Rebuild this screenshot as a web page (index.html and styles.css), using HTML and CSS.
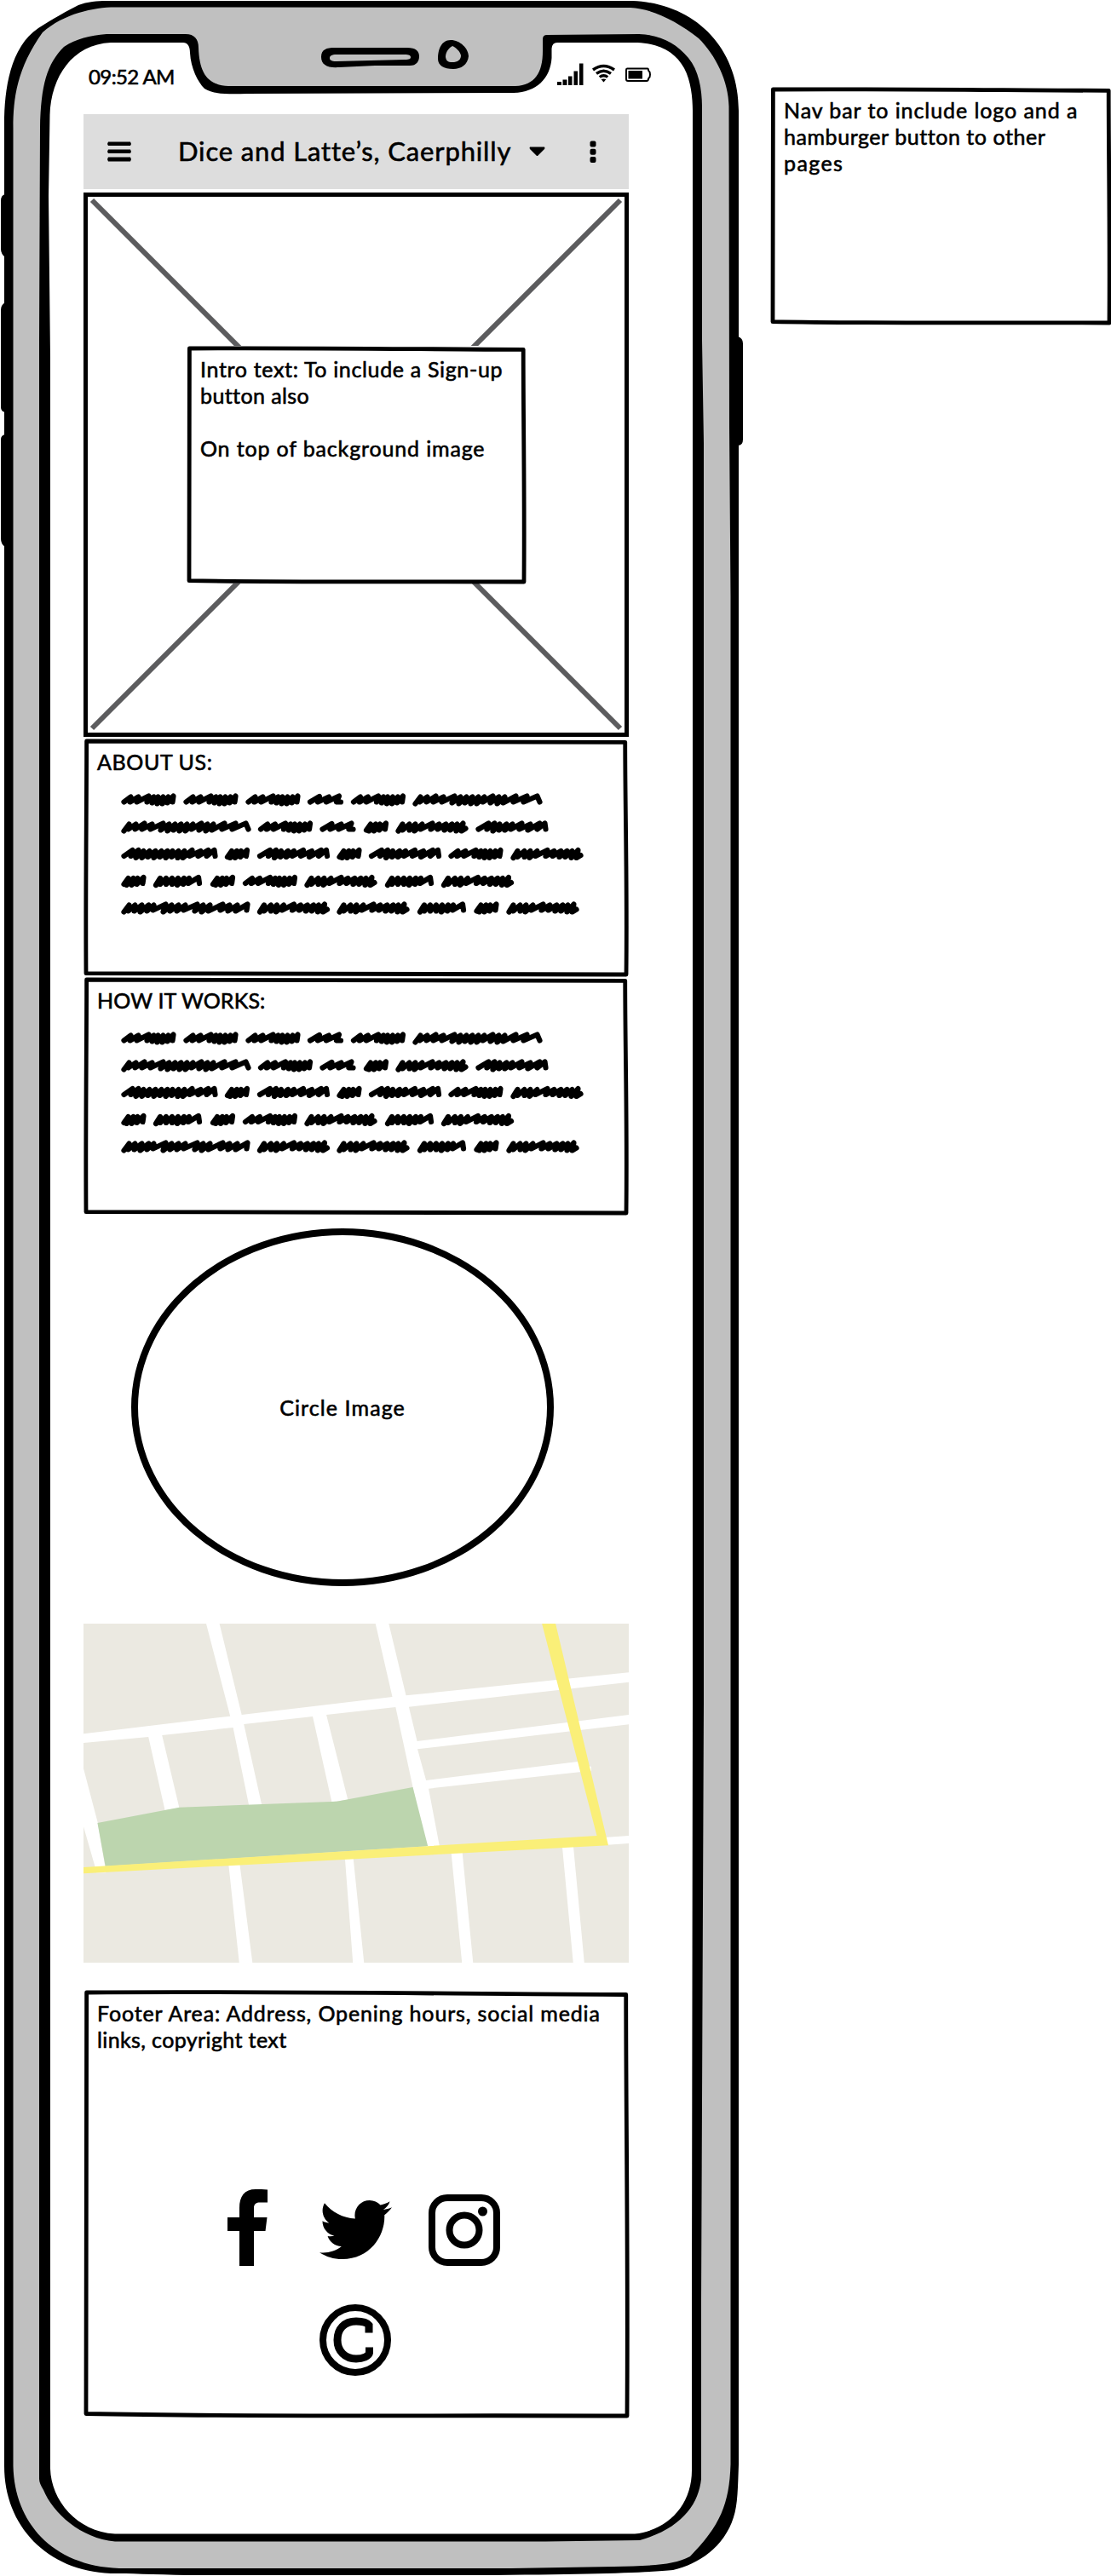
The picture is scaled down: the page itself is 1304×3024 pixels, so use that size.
FILE: index.html
```html
<!DOCTYPE html>
<html lang="en">
<head>
<meta charset="utf-8">
<title>Dice and Latte’s, Caerphilly</title>
<link rel="stylesheet" href="styles.css">
</head>
<body>
<svg class="defs" aria-hidden="true">
  <symbol id="box" viewBox="0 0 100 100" preserveAspectRatio="none" overflow="visible">
    <path class="ink-line" d="M.1 0C33 -.3 66 .3 99.800 .5C99.800 30 100.200 60 100 100C60 99.800 30 100.300 0 99.500C-.1 60 .1 30 .1 0Z"/>
  </symbol>
  <symbol id="w29" overflow="visible"><path d="M3 4L8-3L6 5L14-3L12 5L19-3L18 4L26-4L25 3"/></symbol>
  <symbol id="w42" overflow="visible"><path d="M3 3L14-3.500L12 3L25-3L22 3L37-4L34 3L39 3"/></symbol>
  <symbol id="w58" overflow="visible"><path d="M3 5L8-3L8 4L15-3L15 4L22-3L22 4L29-3L28 5L36-3L35 4L42-3L41 3L53-4L54 3"/></symbol>
  <symbol id="w64" overflow="visible"><path d="M3 3L11-3L10 3L20-3L18 3L32-4L30 3L38-3L36 4L43-3L42 5L49-3L48 5L55-3L54 4L61-4L60 3"/></symbol>
  <symbol id="w85a" overflow="visible"><path d="M3 5L8-3L8 4L16-3L16 4L23-3L22 5L31-3L29 3L43-4L41 3L51-3L49 3L59-3L57 4L66-3L64 4L72-3L71 5L79-4L77 5L82 2"/></symbol>
  <symbol id="w85b" overflow="visible"><path d="M3 3L15-4L13 3L22-4L20 5L28-3L27 4L36-3L34 4L43-3L41 3L54-4L51 3L64-3L61 4L75-4L72 3L81-4L82 3"/></symbol>
  <symbol id="w113" overflow="visible"><path d="M3 3L13-4L11 3L20-4L17 5L26-3L24 5L33-3L31 4L40-3L38 5L47-3L45 4L54-3L52 5L60-3L59 4L67-3L66 5L74-3L72 5L83-4L80 3L93-3L90 3L102-4L100 3L109-4L110 3"/></symbol>
  <symbol id="w152a" overflow="visible"><path d="M3 5L9-3L8 3L17-3L16 3L27-4L24 3L36-3L34 3L49-4L46 4L56-3L54 5L63-3L61 4L70-3L68 5L77-3L75 5L84-3L82 3L94-4L91 4L101-3L99 5L108-3L106 4L121-4L118 3L134-4L130 3L146-4L149 3"/></symbol>
  <symbol id="w152b" overflow="visible"><path d="M3 5L9-3L8 4L16-3L15 4L24-3L22 5L32-3L30 4L38-3L37 3L52-4L49 5L59-3L57 4L67-3L65 4L75-3L73 3L89-4L86 4L96-3L94 5L104-3L102 4L119-4L116 3L127-3L125 4L136-3L134 4L148-4L147 3"/></symbol>
  <symbol id="scribble" viewBox="142 928 545 150">
    <g class="scrawl">
      <use href="#w64" x="142.5" y="938.5"/><use href="#w64" x="215.5" y="938.5"/><use href="#w64" x="288.5" y="938.5"/><use href="#w42" x="361" y="938.5"/><use href="#w64" x="412" y="938.5"/><use href="#w152a" x="484.5" y="938.5"/>
      <use href="#w152a" x="142.5" y="970.5"/><use href="#w64" x="303" y="970.5"/><use href="#w42" x="375.5" y="970.5"/><use href="#w29" x="427" y="970.5"/><use href="#w85a" x="464.5" y="970.5"/><use href="#w85b" x="558.5" y="970.5"/>
      <use href="#w113" x="142.5" y="1002"/><use href="#w29" x="264" y="1002"/><use href="#w85b" x="302" y="1002"/><use href="#w29" x="395.5" y="1002"/><use href="#w85b" x="433" y="1002"/><use href="#w64" x="526.5" y="1002"/><use href="#w85a" x="599.5" y="1002"/>
      <use href="#w29" x="142.5" y="1034"/><use href="#w58" x="180" y="1034"/><use href="#w29" x="247" y="1034"/><use href="#w64" x="285" y="1034"/><use href="#w85a" x="357.5" y="1034"/><use href="#w58" x="452" y="1034"/><use href="#w85a" x="518" y="1034"/>
      <use href="#w152b" x="142.5" y="1065.5"/><use href="#w85a" x="302" y="1065.5"/><use href="#w85a" x="395.5" y="1065.5"/><use href="#w58" x="490" y="1065.5"/><use href="#w29" x="556.5" y="1065.5"/><use href="#w85a" x="594.5" y="1065.5"/>
    </g>
  </symbol>
</svg>

<main class="board">
  <section class="phone">
    <svg class="frame" width="872" height="3024" viewBox="0 0 872 3024" aria-hidden="true">
      <path d="M6 228Q1 229 1 236V292Q1 298 6 302ZM6 355Q1 358 1 364V478Q1 483 6 484ZM6 510Q1 511 1 516V632Q1 639 6 642ZM866 395Q872 397 872 403V516Q872 523 866 523Z"/>
      <path d="M5 145C5 105 12 55 45 33C62 22 80 12 92 6C102 2 115 1 125 1H742C815 4 867 55 867 130V2893C866 2920 866 2940 861 2955C850 2990 820 3010 790 3017C760 3020 700 3022 560 3023H220C180 3022 150 3021 130 3021C55 3018 5 2965 5 2895Z"/>
      <path class="metal" d="M15.500 150C15.500 115 20 80 50 38C75 16 110 8.500 135 8.500L740 9C765 10 795 25 820 45C840 65 855 95 855.500 125L856 500L857.500 700V2893C856 2940 845 2965 810 3001C790 3012 760 3012 720 3013L600 3015H140C60 3012 17 2960 15.500 2895Z"/>
      <path d="M47 150C48 100 55 75 75 55C90 45 105 42 125 40H218C228 40 233 46 233 56C234 85 243 100 268 101H605C628 100 637 85 637 60V46Q637 41 642 41L750 40C775 41 793 50 808 68C820 82 824 105 824 125V400L826 520V2000L823 2700V2910C820 2940 800 2968 751 2982L640 2983.500H135C95 2980 62 2950 51 2923Q46 2915 46 2910V400Z"/>
      <path class="glass" d="M57 230L58.500 135C60 90 85 52 130 50H215C220 50 223 54 223 62C224 80 232 96 240 104C250 111 270 110.500 290 110L603 109C630 108 646 92 647.500 68V57Q648 50 654 50H748C775 51 793 62 803 80C811 95 813 115 813 130V2000L812 2700V2900C812 2940 785 2970 745 2974.500H135C90 2972 60 2935 59 2898V420Z"/>
      <path fill-rule="evenodd" d="M393 56H478C488 56 492 60 492 66S489 77 481 77H440L398 79C384 80 377 76 377 67S383 56 393 56ZM395 64C389 64 387 66 387 68S388 72 395 72L475 70C481 70 482 69 482 67S480 64 475 64Z"/>
      <path fill-rule="evenodd" d="M529 47C540 47 550 57 550 66C549 76 541 81 532 81C521 81 514 77 514 69C514 58 518 47 529 47ZM531 54C527 56 523 61 523 67C524 73 527 73 533 73C539 72 541 69 541 65C540 60 535 56 531 54Z"/>
    </svg>

    <div class="screen">
      <header class="status">
        <span class="clock">09:52 AM</span>
        <svg width="110" height="27" viewBox="0 0 110 27" aria-hidden="true">
          <path d="M0 22h5v4h-5zM6.500 19.500h5v6.500h-5zM13 15.500h4.500v10.500h-4.500zM19.500 9.500h4.500v16.500h-4.500zM26 .5h4.500v25.500h-4.500z"/>
          <path class="wave" d="M42 8Q54.500 -1 67 8M46 12.300Q54.500 6 63 12.300M49.800 16.500Q54.500 12.800 59.200 16.500"/>
          <path d="M51.500 19Q54.500 17.800 57.500 19L54.500 22.500Z"/>
          <path class="cell" d="M82 6.500H106Q107 6.500 107.200 9Q109 10 109 13.500T107.200 18Q107 21 105 21H83Q81 21 81 19V8Q81 6.500 82 6.500Z"/>
          <path d="M83.500 9H100V18.500H83.500Z"/>
        </svg>
      </header>

      <nav class="nav">
        <svg class="burger" width="28" height="24" viewBox="0 0 28 24"><path d="M1 .5H27L28 3L27 5H1L0 3ZM1 9.500H27L28 12L27 14H1L0 12ZM1 18.500H27L28 21L27 23.500H1L0 21Z"/></svg>
        <span class="brand">Dice and Latte’s, Caerphilly</span>
        <svg class="caret" width="19" height="12" viewBox="0 0 19 12"><path d="M1 .5H18Q19 2 18 3L10.500 10.500Q9.500 11.500 8.500 10.500L1 3Q0 1.500 1 .5Z"/></svg>
        <svg class="dots" width="8" height="27" viewBox="0 0 8 27"><rect x=".5" y=".5" width="7" height="7" rx="2"/><rect x=".5" y="9.800" width="7" height="7" rx="2"/><rect x=".5" y="19" width="7" height="7" rx="2"/></svg>
      </nav>

      <section class="hero">
        <svg class="cross" viewBox="0 0 640 640" aria-hidden="true"><path d="M10 9L630 629M630 9L10 629"/></svg>
        <div class="card intro">
          <svg class="outline"><use href="#box"/></svg>
          <p><span class="intro-lead">Intro text: To include a Sign-up</span><br><span class="intro-tail">button also</span></p>
          <p class="intro-place">On top of background image</p>
        </div>
      </section>

      <section class="card about">
        <svg class="outline"><use href="#box"/></svg>
        <h2>ABOUT US:</h2>
        <svg class="lines"><use href="#scribble"/></svg>
      </section>

      <section class="card how">
        <svg class="outline"><use href="#box"/></svg>
        <h2>HOW IT WORKS:</h2>
        <svg class="lines"><use href="#scribble"/></svg>
      </section>

      <div class="circle"><span>Circle Image</span></div>

      <svg class="map" viewBox="19 48 1520 1194" preserveAspectRatio="none" role="img" aria-label="Map">
        <path class="land" d="M19 48H1539V1242H19Z"/>
        <path class="road" d="M19 436L428 374L361 48H398L460 369L880 306L833 48H870L918 301L1539 220V254L926 341L949 462L1539 369V403L950 490L974 600L1397 534L1434 552V566L981 629L1011 829V860H979L937 623L889 342L696 369L756 668L711 676L658 375L466 402L516 687H480L436 414L238 441L286 697L246 705L200 447L19 468Z"/>
        <path class="road" d="M19 558L59 750L82 925H55L51 903L19 763ZM422 880H453L490 1242H453ZM747 860H770L801 1242H770ZM1043 840H1074L1105 1242H1074ZM1353 825H1384L1415 1242H1384ZM1470 801L1539 795V822L1470 828Z"/>
        <path class="park" d="M58 750L286 695L725 674L937 624L979 832L80 902Z"/>
        <path class="main-road" d="M1297 48H1335L1482 829L19 928V906L1450 795Z"/>
      </svg>

      <footer class="card foot">
        <svg class="outline"><use href="#box"/></svg>
        <p><span class="foot-lead">Footer Area: Address, Opening hours, social media</span><br><span class="foot-tail">links, copyright text</span></p>
        <div class="social">
          <svg width="47" height="90" viewBox="0 0 47 90"><path d="M47 .5C42 0 38 0 33 0C20 0 14 8 14 22V33H0V49H14V90H31V49H44.500L46.500 33H31V22C31 17 34 15.500 38 15.500H47Z"/></svg>
          <svg class="bird" width="85" height="69" viewBox="0 48 512 416"><path d="M459.370 151.716c.325 4.548.325 9.097.325 13.645 0 138.720-105.583 298.558-298.558 298.558-59.452 0-114.680-17.219-161.137-47.106 8.447.974 16.568 1.299 25.340 1.299 49.055 0 94.213-16.568 130.274-44.832-46.132-.975-84.792-31.188-98.112-72.772 6.498.974 12.995 1.624 19.818 1.624 9.421 0 18.843-1.300 27.614-3.573-48.081-9.747-84.143-51.980-84.143-102.985v-1.299c13.969 7.797 30.214 12.670 47.431 13.319-28.264-18.843-46.781-51.005-46.781-87.391 0-19.492 5.197-37.360 14.294-52.954 51.655 63.675 129.300 105.258 216.365 109.807-1.624-7.797-2.599-15.918-2.599-24.040 0-57.828 46.782-104.934 104.934-104.934 30.213 0 57.502 12.670 76.670 33.137 23.715-4.548 46.456-13.320 66.599-25.340-7.798 24.366-24.366 44.833-46.132 57.827 21.117-2.273 41.584-8.122 60.426-16.243-14.292 20.791-32.161 39.308-52.628 54.253z"/></svg>
          <svg class="insta" width="84" height="84" viewBox="0 0 84 84"><rect x="4" y="4" width="76" height="76" rx="18"/><circle cx="42" cy="42" r="17.500"/><circle class="solid" cx="63.500" cy="20" r="5.500"/></svg>
        </div>
        <svg class="copy" width="84" height="84" viewBox="0 0 84 84"><circle cx="42" cy="42" r="38"/><path d="M58 33.500V24.500C56 22 51 20 43 20C29 20 21 29 21 42S30 64 43 64C51 64 58 61 58.500 57V50.500"/></svg>
      </footer>
    </div>
  </section>

  <aside class="card note">
    <svg class="outline"><use href="#box"/></svg>
    <p><span class="note-first">Nav bar to include logo and a</span><br><span class="note-second">hamburger button to other</span><br><span class="note-last">pages</span></p>
  </aside>
</main>
</body>
</html>
```

FILE: styles.css
```css
* { box-sizing: border-box; }

body {
  margin: 0;
  background: #fff;
  color: #000;
  font: 400 25px/31px Lato, "Open Sans", sans-serif;
  font-variant-ligatures: none;
  -webkit-text-stroke: 0.6px #000;
}

p, h2 { margin: 0; font: inherit; white-space: nowrap; }
svg { display: block; flex: none; }
.defs { position: absolute; width: 0; height: 0; }

.board { display: flex; width: 1304px; height: 3024px; overflow: hidden; }

.phone { position: relative; flex: none; width: 872px; height: 3024px; }
.frame { position: absolute; inset: 0; }
.metal { fill: #c0c0c0; }
.glass { fill: #fff; }

.screen {
  position: relative;
  display: flex;
  flex-direction: column;
  width: 640px;
  margin-left: 98px;
}

.status {
  display: flex;
  justify-content: space-between;
  height: 134px;
  padding: 74px 0 0 6px;
  margin-right: -26px;
}
.clock { font-size: 24px; line-height: 32px; letter-spacing: -0.6px; }
.wave { fill: none; stroke: #000; stroke-width: 3.4; }
.cell { fill: none; stroke: #000; stroke-width: 2; }

.nav {
  display: flex;
  align-items: center;
  height: 88px;
  padding-left: 28px;
  background: #ddd;
}
.brand {
  width: 392px;
  margin: 0 0 3px 55px;
  font-size: 31px;
  line-height: 40px;
  letter-spacing: 0.85px;
  white-space: nowrap;
}
.caret { margin-left: 20px; }
.dots { margin-left: 52px; }

.hero {
  position: relative;
  display: flex;
  align-items: center;
  justify-content: center;
  height: 639px;
  margin-top: 4px;
  border: 5px solid #000;
}
.cross { position: absolute; inset: -5px; width: 640px; height: 640px; }
.cross path { stroke: #5c5c5e; stroke-width: 6; fill: none; }

.card { position: relative; background: #fff; padding: 12px 16px; }
.outline { position: absolute; left: 2.5px; top: 2.5px; width: calc(100% - 5px); height: calc(100% - 5px); overflow: visible; }
.ink-line { fill: none; stroke: #000; stroke-width: 4.8px; vector-effect: non-scaling-stroke; stroke-linejoin: round; }
.card p, .card h2 { position: relative; }

.intro { width: 398px; height: 279px; }
.intro p + p { margin-top: 31px; }
.intro-lead { letter-spacing: 0.66px; }
.intro-tail { letter-spacing: 0.4px; }
.intro-place { letter-spacing: 0.85px; }

.about, .how { width: 639px; height: 279px; margin-top: 2px; }
.about h2 { letter-spacing: 0.6px; }
.how { margin-top: 1px; }
.how h2 { letter-spacing: 0.15px; }
.lines { width: 545px; height: 150px; margin: 18px 0 0 28px; }
.scrawl { fill: none; stroke: #000; stroke-width: 6.2; stroke-linecap: round; stroke-linejoin: round; }

.circle {
  display: flex;
  align-items: center;
  justify-content: center;
  width: 496px;
  height: 420px;
  margin: 16px 0 0 56px;
  border: 8px solid #000;
  border-radius: 50%;
  letter-spacing: 1.1px;
}

.map { width: 640px; height: 398px; margin-top: 44px; }
.land { fill: #ebe9e1; }
.road { fill: #fff; }
.park { fill: #bcd5ae; }
.main-road { fill: #faef78; }

.foot { width: 640px; height: 502px; margin-top: 32px; }
.foot-lead { letter-spacing: 0.86px; }
.foot-tail { letter-spacing: 0.38px; }
.social { display: flex; align-items: center; margin: 160px 0 0 153px; height: 90px; }
.bird { margin: 5px 0 0 61px; }
.insta { margin: 6px 0 0 43px; }
.insta, .copy { fill: none; stroke: #000; stroke-width: 8; }
.insta .solid { fill: #000; stroke: none; }
.copy { margin: 45px 0 0 261px; }
.copy path { stroke-width: 9; }

.note { flex: none; width: 400px; height: 279px; margin: 102px 0 0 32px; }
.note-first { letter-spacing: 0.93px; }
.note-second { letter-spacing: 0.55px; }
.note-last { letter-spacing: 1.4px; }
```
